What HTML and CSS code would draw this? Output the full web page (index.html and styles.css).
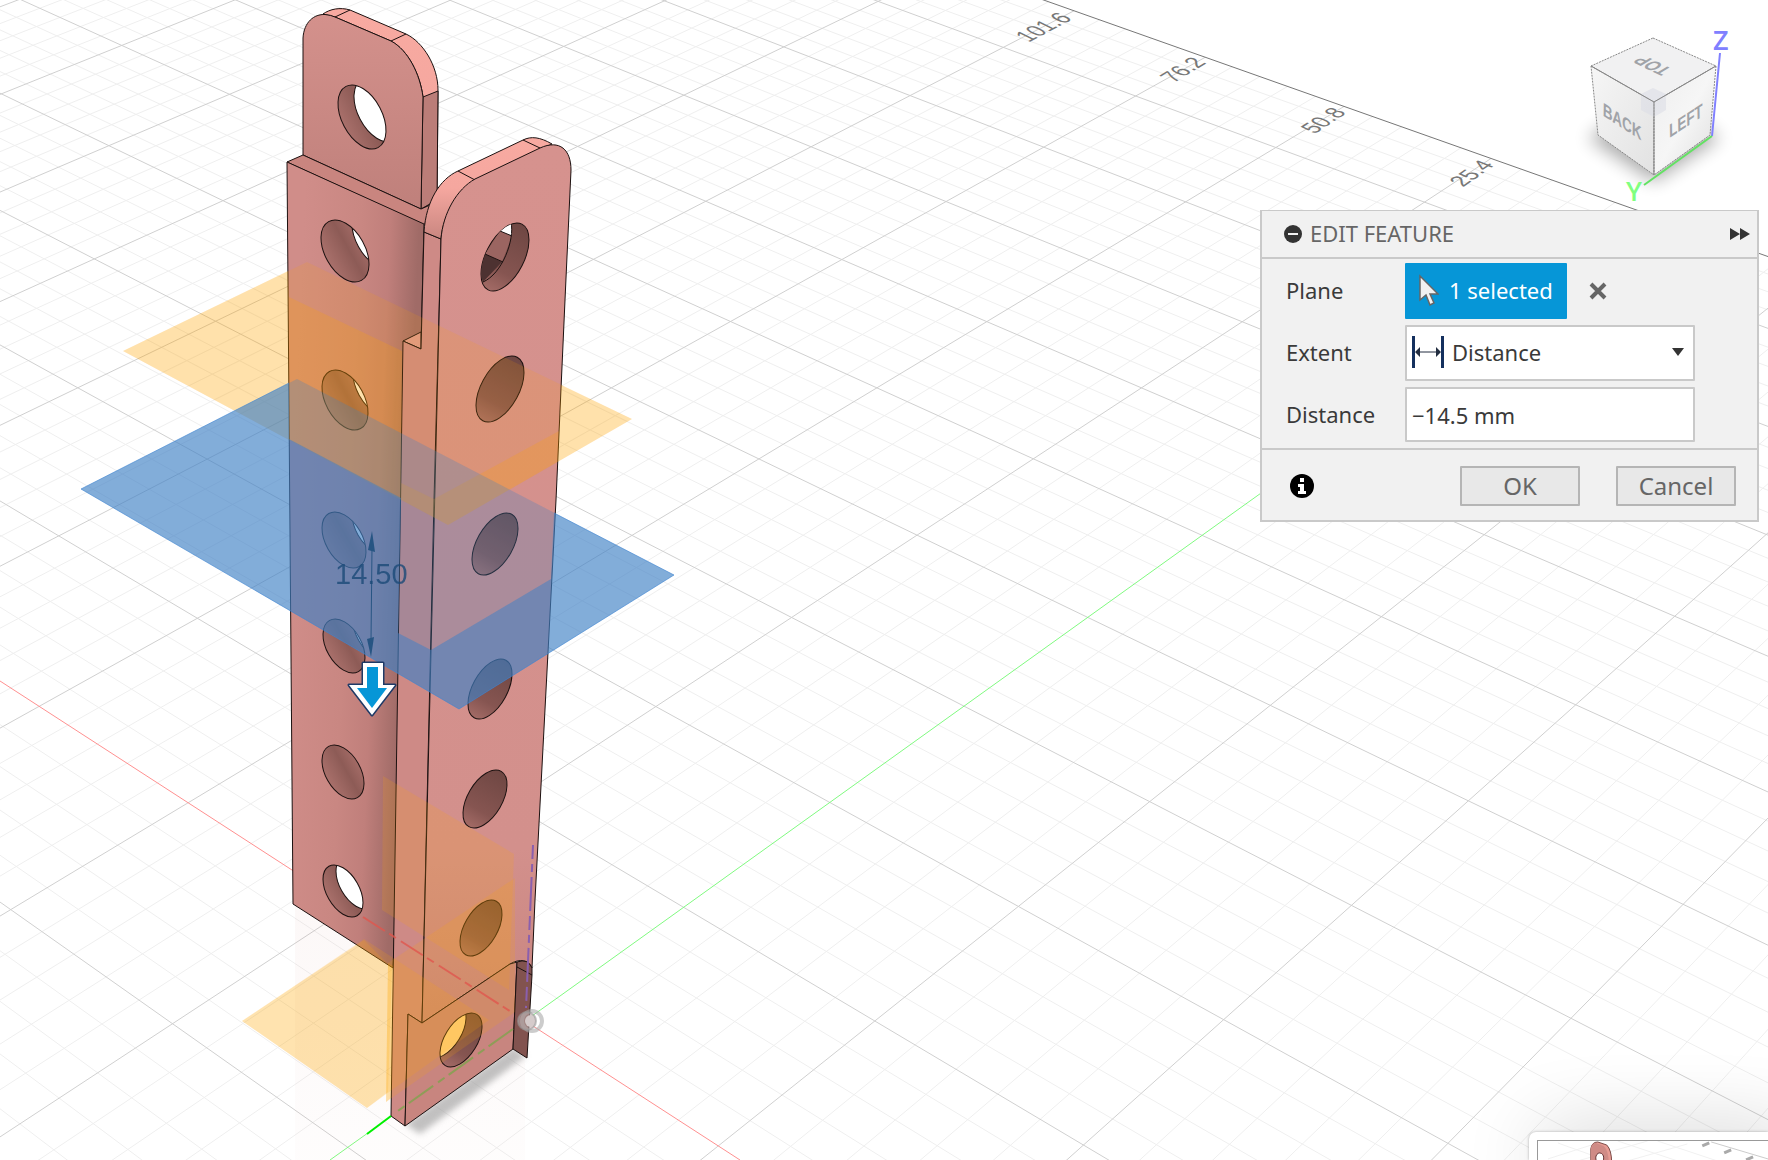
FILE: index.html
```html
<!DOCTYPE html>
<html lang="en">
<head>
<meta charset="utf-8">
<title>Edit Feature</title>
<link rel="stylesheet" href="styles.css">
</head>
<body>
<main class="workspace">
  <svg class="scene" viewBox="0 0 1768 1160" preserveAspectRatio="xMidYMid slice" role="img" aria-label="Bracket model with offset plane">
    <defs>
      <linearGradient id="flange" gradientUnits="userSpaceOnUse" x1="287" x2="403" y1="600" y2="605">
        <stop offset="0" stop-color="#d08d89"/><stop offset=".5" stop-color="#c98782"/><stop offset=".75" stop-color="#c07f7b"/><stop offset="1" stop-color="#a06b67"/>
      </linearGradient>
      <linearGradient id="tab" x1="0" x2="0" y1="0" y2="1">
        <stop offset="0" stop-color="#d4918c"/><stop offset="1" stop-color="#bf807b"/>
      </linearGradient>
      <linearGradient id="web" x1="0" x2="0" y1="0" y2="1">
        <stop offset="0" stop-color="#d6928e"/><stop offset=".8" stop-color="#d3908c"/><stop offset="1" stop-color="#c8857f"/>
      </linearGradient>
      <linearGradient id="rim" x1="0" x2="0" y1="0" y2="1">
        <stop offset="0" stop-color="#f8aaa1"/><stop offset=".5" stop-color="#f5a79f"/><stop offset="1" stop-color="#c98680"/>
      </linearGradient>
      <linearGradient id="boreLeft" x1="0" x2="1" y1="0" y2="0">
        <stop offset="0" stop-color="#a9706b"/><stop offset=".6" stop-color="#8d5b56"/><stop offset="1" stop-color="#a36b66"/>
      </linearGradient>
      <linearGradient id="boreRight" x1="0" x2="0" y1="0" y2="1">
        <stop offset="0" stop-color="#6f4743"/><stop offset=".7" stop-color="#865551"/><stop offset="1" stop-color="#a36b66"/>
      </linearGradient>
      <linearGradient id="mirror" x1="0" x2="0" y1="0" y2="1">
        <stop offset="0" stop-color="#d08880" stop-opacity=".06"/><stop offset="1" stop-color="#d08880" stop-opacity=".02"/>
      </linearGradient>
      <filter id="soft" x="-20%" y="-20%" width="140%" height="140%"><feGaussianBlur stdDeviation="3"/></filter>
    </defs>

    <g id="grid"></g>

    <g class="grid-label">
      <text text-anchor="end" transform="translate(1073 19) rotate(-28) skewX(36)">101.6</text>
      <text text-anchor="end" transform="translate(1207 63) rotate(-31) skewX(35)">76.2</text>
      <text text-anchor="end" transform="translate(1347 113) rotate(-33) skewX(34)">50.8</text>
      <text text-anchor="end" transform="translate(1495 165) rotate(-35) skewX(33)">25.4</text>
    </g>

    <path class="axis-x" d="M0 681L740 1160"/>
    <path class="axis-y" d="M330 1160L560 996L1650 214"/>

    <path fill="url(#mirror)" d="M295 900H525V1160H295Z"/>
    <path class="floor-shadow" filter="url(#soft)" d="M405 1124L513 1047L526 1056L420 1134Z"/>

    <g class="edge">
      <!-- rear tab -->
      <path fill="url(#rim)" d="M323 14C330 9 340 7 350 10L406 34C423 42 438 66 438 90L437 200L421 209L423 97C420 74 408 50 391 41L335 17Z"/>
      <path fill="#bb7d78" d="M423 97L438 91L437 200L421 209Z"/>
      <path fill="url(#tab)" d="M303 155L303 38C304 22 314 14 325 14.500Q331 15 335 17L391 41C408 50 420 74 423 97L421 209Z"/>
      <path d="M335 17L350 10M391 41L406 34"/>
      <!-- rear flange -->
      <path fill="#c9857f" d="M287 162L303 155L421 209L437 202L424 225Z"/>
      <path fill="url(#flange)" d="M287 162L424 224L421 345L393 968L293 904Z"/>
      <!-- web strip -->
      <path fill="#df9a8f" d="M403 341L421 332V349Z"/>
      <path fill="#ce8a86" d="M424 232L441 239L434 500L422 1023L408 1014L405 1126L391 1116L403 341L421 349Z"/>
      <!-- front flange -->
      <path fill="url(#rim)" d="M424 232C426 201 440 179 458 171L523 140C531 136 540 137 552 144L475 180C460 190 443 213 441 239Z"/>
      <path d="M458 171L475 180M523 140L540 148"/>
      <path fill="url(#web)" d="M441 239C443 213 457 189 475 179L540 148C560 139 571 150 571 170L565 300L556 500L535 900L532 968C529 960 520 958 510 964L422 1023Z"/>
      <path fill="#c8857f" d="M408 1014L422 1023L510 964L517 962L513 1049L405 1126Z"/>
      <path fill="#82534f" d="M517 962Q528 958 532 968L532 975L527 1058L513 1049Z"/>
      <path d="M517 967L532 975"/>
    </g>

    <g id="holes"></g>
    <g clip-path="url(#bore7)">
      <path fill="#9b6561" d="M500 231L512 236L502 262L485 254Z"/>
      <path fill="#4d3231" d="M485 254L502 262L483 282L478 268Z"/>
      <path fill="#fff" d="M500 231L511 222L512 236Z"/>
      <path class="line" d="M500 231L512 236M485 254L503 262M511 222C515 240 502 274 483 282"/>
    </g>

    <!-- origin planes -->
    <g fill="#ffa500">
      <path opacity=".16" d="M364 939L489 1020L367 1108L242 1021Z"/>
      <path opacity=".18" d="M364 940L392 968L388 1092L367 1108L242 1021Z"/>
      <path opacity=".16" d="M383 776L514 854L509 990L382 910Z"/>
      <path opacity=".16" d="M515 878L388 963L386 1102L515 1012Z"/>
      <path opacity=".2" d="M388 963L393 966L391 1098L386 1102Z"/>
    </g>

    <!-- base plane -->
    <path fill="#ffa500" opacity=".14" d="M307 262L632 419L448 525L123 351Z"/>
    <path fill="#ffa500" opacity=".22" d="M123 351L288 271L289 297L402 351L401 483L434 499L559 431L561 385L632 419L448 525Z"/>

    <!-- offset plane -->
    <path fill="#3f80c5" opacity=".27" d="M297 379L674 575L459 709L81 489Z"/>
    <path fill="#3f80c5" opacity=".52" d="M81 489L289 383L289 439L401 498L398 633L431 650L551 579L554 513L674 575L459 709Z"/>
    <path class="plane-edge" d="M289 383L81 489L459 709L674 575L554 513"/>

    <!-- axes inside the body -->
    <path class="hidden-x" d="M363 917L513 1013"/>
    <path class="hidden-y" d="M513 1029L395 1113"/>
    <path class="hidden-z" d="M533 845L526 1008"/>
    <path class="tip-y" d="M391 1116L367 1134"/>
    <g>
      <circle class="origin-shade" cx="532" cy="1021" r="10"/>
      <circle fill="#fff" cx="531" cy="1021" r="6"/>
      <circle class="origin-ring" cx="527" cy="1021" r="9"/>
    </g>

    <!-- dimension and drag handle -->
    <path class="dim-line" d="M372 548L371 640"/>
    <path class="dim-head" d="M372 531L375 552L368 550ZM371 657L374 637L367 639Z"/>
    <text class="dim-text" x="335" y="584">14.50</text>
    <path class="handle-outer" d="M363 663H383V685H395L372 715L349 685H363Z"/>
    <path class="handle-mid" d="M363 663H383V685H395L372 715L349 685H363Z"/>
    <path class="handle-core" d="M367 667H378V688H387L372 708L357 688H367Z"/>
  </svg>

  <svg class="view-cube" viewBox="0 0 190 210" role="img" aria-label="View cube">
    <defs>
      <linearGradient id="faceBack" x1="0" x2="1" y1="0" y2="1"><stop offset="0" stop-color="#f6f6f6"/><stop offset="1" stop-color="#e2e2e2"/></linearGradient>
      <linearGradient id="faceLeft" x1="0" x2="1" y1="0" y2="1"><stop offset="0" stop-color="#eee"/><stop offset=".5" stop-color="#f6f6f6"/><stop offset="1" stop-color="#ddd"/></linearGradient>
      <filter id="cubeBlur" x="-30%" y="-30%" width="160%" height="160%"><feGaussianBlur stdDeviation="9"/></filter>
    </defs>
    <path class="cube-shadow" filter="url(#cubeBlur)" d="M84 95L150 138L84 182L18 138Z"/>
    <g class="cube-face">
      <path fill="#f1f1f2" d="M83 38L146 66L84 102L21 66Z"/>
      <path fill="url(#faceBack)" d="M21 66L84 102V175L28 135Z"/>
      <path fill="url(#faceLeft)" d="M146 66L140 135L84 175V102Z"/>
    </g>
    <path fill="#dcdee6" opacity=".6" d="M71 94L83 88L96 94V110L84 117L71 110Z"/>
    <path class="cube-edge" d="M21 66L84 102L146 66M84 102V175"/>
    <g class="cube-text">
      <text text-anchor="middle" transform="translate(88 62) rotate(205) skewX(-34)">TOP</text>
      <text text-anchor="middle" transform="translate(52 128) rotate(33) skewX(32)">BACK</text>
      <text text-anchor="middle" transform="translate(116 127) rotate(-33) skewX(-32)">LEFT</text>
    </g>
    <path class="cube-z" d="M150 53L142 136"/>
    <path class="cube-y" d="M142 136L74 185"/>
    <text class="letter-z" x="143" y="50">Z</text>
    <text class="letter-y" x="56" y="201">Y</text>
  </svg>

  <form class="panel">
    <header class="panel-head">
      <button type="button" class="icon-button" aria-label="Collapse">
        <svg width="18" height="18" viewBox="0 0 18 18"><circle cx="9" cy="9" r="9" fill="#333"/><path d="M4 9H14" stroke="#f1f1f1" stroke-width="2"/></svg>
      </button>
      <h1 class="panel-title">EDIT FEATURE</h1>
      <button type="button" class="icon-button" aria-label="Expand">
        <svg width="20" height="12" viewBox="0 0 20 12"><path d="M0 0L10 6L0 12ZM10 0L20 6L10 12Z" fill="#333"/></svg>
      </button>
    </header>
    <div class="panel-body">
      <span class="label" id="planeLabel">Plane</span>
      <div class="plane-field">
        <button type="button" class="selection" aria-describedby="planeLabel">
          <svg width="20" height="32" viewBox="0 0 20 32"><path d="M1 2V26L7 21L11 31L15 29L11 20H19Z" fill="#f1f1f1" stroke="#666" stroke-width="1.500"/></svg>
          <span>1 selected</span>
        </button>
        <button type="button" class="icon-button" aria-label="Clear selection">
          <svg width="18" height="18" viewBox="0 0 18 18"><path d="M2 2L16 16M16 2L2 16" stroke="#666" stroke-width="4"/></svg>
        </button>
      </div>
      <label class="label" for="extent">Extent</label>
      <div class="select-wrap">
        <select id="extent" class="field"><option>Distance</option></select>
        <svg class="extent-icon" width="32" height="32" viewBox="0 0 32 32"><path d="M1.500 0V32M30.500 0V32" stroke="#14305e" stroke-width="3"/><path d="M5 16H27" stroke="#222d40" stroke-width="1"/><path d="M3 16L8 11V21ZM29 16L24 11V21Z" fill="#222d40"/></svg>
        <svg class="caret" width="12" height="8" viewBox="0 0 12 8"><path d="M0 0H12L6 8Z" fill="#333"/></svg>
      </div>
      <label class="label" for="distance">Distance</label>
      <input id="distance" class="field" type="text" value="−14.5 mm">
    </div>
    <footer class="panel-foot">
      <svg class="info" width="24" height="24" viewBox="0 0 24 24" role="img" aria-label="Information"><circle cx="12" cy="12" r="12"/><path d="M10 4H14V8H10ZM8 10H14V17H16V20H8V17H10V13H8Z" fill="#fff"/></svg>
      <button type="submit" class="action">OK</button>
      <button type="button" class="action">Cancel</button>
    </footer>
  </form>

  <aside class="preview" aria-label="Preview">
    <svg class="preview-image" viewBox="0 0 231 20" preserveAspectRatio="xMinYMin slice">
      <g stroke="#f1f1f1"><path d="M10 18L60 2M40 20L110 0M90 20L150 3M20 2L70 20M80 0L140 20M120 0L180 20"/></g>
      <path d="M174 1L231 18" stroke="#ccc" fill="none"/>
      <path d="M165 5L172 2M187 12L194 9M209 19L216 16" stroke="#aaa" stroke-width="3"/>
      <path d="M53 22V8Q54 1 60 1L69 4Q74 9 74 22Z" fill="#e79b93" stroke="#7c4c48"/>
      <path d="M53 22V8Q54 2 58 2L66 5Q71 10 71 22Z" fill="#cf8b86"/>
      <ellipse cx="62" cy="17" rx="4" ry="5" fill="#fff" stroke="#633"/>
    </svg>
  </aside>
</main>
<script src="scene.js"></script>
</body>
</html>
```
FILE: styles.css
```css
* { box-sizing: border-box; }

body {
  margin: 0;
  background: #fff;
  color: #3a3a3a;
  font-family: "Noto Sans", "Open Sans", sans-serif;
  font-size: 22px;
  line-height: 30px;
}

.workspace {
  position: relative;
  min-height: 100vh;
  overflow: hidden;
}

.scene {
  position: absolute;
  inset: 0;
  width: 100%;
  height: 100%;
}

/* Scene */
.minor { stroke: #efefef; stroke-width: 1; }
.major { stroke: #d0d0d0; stroke-width: 1; }
.border { stroke: #777; stroke-width: 1; }
.grid-label { fill: #777; font: 20px/1 "Liberation Sans Narrow", "Liberation Sans", sans-serif; }
.axis-x, .axis-y { fill: none; stroke-width: 1; }
.axis-x { stroke: #ff9090; }
.axis-y { stroke: #80fa80; }
.floor-shadow { fill: #999; opacity: .6; }
.edge { fill: none; stroke: #1c1110; stroke-width: 1; stroke-linejoin: round; }
.line { fill: none; stroke: #1c1110; stroke-width: 1; }
.plane-edge { fill: none; stroke: #3f86d2; opacity: .6; }
.hidden-x, .hidden-y, .hidden-z { fill: none; stroke-width: 2; }
.hidden-x { stroke: #e0564e; stroke-dasharray: 26 5 8 6; opacity: .8; }
.hidden-y { stroke: #7fa34e; stroke-dasharray: 30 5 8 6; opacity: .8; }
.hidden-z { stroke: #8a5fae; stroke-dasharray: 14 5 8 5 34 5; }
.tip-y { stroke: #00f000; stroke-width: 2; }
.origin-ring { fill: #b9a8a8; fill-opacity: .6; stroke: #999; stroke-opacity: .6; stroke-width: 2; }
.origin-shade { fill: none; stroke: #aaa; stroke-opacity: .6; stroke-width: 4; }
.dim-line { stroke: #275583; stroke-width: 1; }
.dim-head { fill: #275583; }
.dim-text { fill: #1b4a78; opacity: .8; font: 29px/1 "Liberation Sans", sans-serif; }
.handle-outer { fill: #1f3a66; stroke: #1f3a66; stroke-width: 3; stroke-linejoin: round; }
.handle-mid { fill: #fff; }
.handle-core { fill: #0696d7; }

/* View cube */
.view-cube {
  position: absolute;
  top: 0;
  right: 8px;
  width: 190px;
  height: 210px;
}
.cube-shadow { fill: #000; opacity: .32; }
.cube-face { stroke: #888; stroke-width: 1; stroke-dasharray: 2 1; }
.cube-edge { fill: none; stroke: #888; stroke-width: 1; }
.cube-text { fill: #a0a3a8; font: bold 16px/1 "Liberation Sans Narrow", "Liberation Sans", sans-serif; }
.cube-z { stroke: #8080ff; stroke-width: 2; }
.cube-y { stroke: #62e262; stroke-width: 2; }
.letter-z, .letter-y { font: 600 27px/1 "Open Sans", sans-serif; }
.letter-z { fill: #8080ff; }
.letter-y { fill: #80ff80; }

/* Dialog */
.panel {
  position: absolute;
  top: 210px;
  right: 9px;
  width: 499px;
  background: #f1f1f1;
  border: 2px solid #c9c9c9;
  border-top-width: 1px;
}

.panel-head {
  display: flex;
  align-items: center;
  gap: 8px;
  height: 48px;
  padding: 0 7px 0 22px;
  border-bottom: 2px solid #c9c9c9;
}

.panel-title {
  flex: 1;
  margin: 0;
  padding-bottom: 2px;
  color: #666;
  font-size: 22px;
  font-weight: 400;
}

.icon-button {
  display: flex;
  padding: 0;
  border: 0;
  background: none;
}

.panel-body {
  display: grid;
  grid-template-columns: 119px 290px;
  row-gap: 6px;
  align-items: center;
  padding: 4px 24px 6px;
}

.label { padding-bottom: 2px; }

.plane-field {
  display: flex;
  align-items: center;
  gap: 22px;
}

.selection {
  display: flex;
  align-items: center;
  gap: 10px;
  width: 162px;
  height: 56px;
  padding: 0 0 2px 14px;
  border: 0;
  border-radius: 1px;
  background: #0696d7;
  color: #fff;
  font: inherit;
  white-space: nowrap;
}

.select-wrap { position: relative; }

.field {
  display: block;
  width: 100%;
  height: 56px;
  padding: 0 5px 2px;
  border: 2px solid #c9c9c9;
  border-radius: 1px;
  background: #fff;
  color: #3a3a3a;
  font: inherit;
}

select.field {
  appearance: none;
  padding-left: 45px;
}

input.field {
  height: 55px;
  padding-bottom: 0;
}

.extent-icon {
  position: absolute;
  top: 11px;
  left: 7px;
}

.caret {
  position: absolute;
  top: 23px;
  right: 11px;
}

.panel-foot {
  display: flex;
  align-items: center;
  gap: 36px;
  height: 72px;
  padding: 2px 21px 0 28px;
  border-top: 2px solid #c9c9c9;
}

.info { margin-right: auto; }

.action {
  width: 120px;
  height: 40px;
  padding: 0;
  border: 2px solid #b5b5b5;
  border-radius: 1px;
  background: #e8e8e8;
  color: #666;
  font: inherit;
  font-size: 24px;
  line-height: 32px;
}

/* Preview window peeking in from the corner */
.preview {
  position: absolute;
  right: 0;
  bottom: 0;
  width: 239px;
  height: 28px;
  padding: 8px 0 0 8px;
  border-radius: 7px 0 0 0;
  background: #fff;
  box-shadow: 0 0 3px rgba(0, 0, 0, .3), 20px 10px 80px 10px rgba(0, 0, 0, .2);
}

.preview-image {
  display: block;
  width: 100%;
  height: 20px;
  border: 1px solid #999;
  border-width: 1px 0 0 1px;
}
```
FILE: scene.js
```js
const NS = "http://www.w3.org/2000/svg";

function add(parent, tag, attrs) {
  const node = document.createElementNS(NS, tag);
  for (const key in attrs) node.setAttribute(key, attrs[key]);
  parent.appendChild(node);
  return node;
}

/* Ground plane: u counts 25.4 mm steps from the green axis, v from the far border. */
function project(u, v) {
  const w = 1 + 0.0305 * u - 0.032 * v;
  return [
    (1647 - 110.48 * u - 131.33 * v) / w,
    (213.7 - 50.4 * u + 49.8 * v) / w
  ];
}

const grid = document.getElementById("grid");
function gridLine(a, b, kind) {
  const [x1, y1] = project(...a);
  const [x2, y2] = project(...b);
  add(grid, "line", { x1, y1, x2, y2, class: kind });
}
/* The two coloured axes take the place of grid lines 0 and 49. */
for (const kind of ["minor", "major"]) {
  for (let i = -30; i <= 60; i++) {
    if (i !== 0 && (i % 5 === 0) === (kind === "major")) gridLine([i / 5, 0], [i / 5, 14], kind);
  }
  for (let j = 1; j <= 70; j++) {
    if (j !== 49 && (j % 5 === 4) === (kind === "major")) gridLine([-6, j / 5], [12, j / 5], kind);
  }
}
gridLine([-6, 0], [12, 0], "border");

/* Bores: centre, half extents, lean, then the offset and fill of the far opening. */
const bores = [
  [362, 117, 24, 32, 0.42, 16, -7, "#fff"],
  [345, 251, 24, 31, 0.42, 31, -14, "#fff"],
  [345, 400, 23, 30, 0.42, 31, -14, "#fff"],
  [344, 540, 22, 28, 0.42, 30, -14, "#fff"],
  [344, 646, 21, 27, 0.42, 30, -14, "#fff"],
  [343, 772, 21, 27, 0.42],
  [343, 891, 20, 26, 0.45, 13, -8, "#fff"],
  [505, 257, 24, 34, -0.5],
  [500, 389, 24, 33, -0.5],
  [495, 544, 23, 31, -0.5],
  [490, 689, 22, 30, -0.5],
  [485, 799, 22, 29, -0.5],
  [481, 928, 21, 28, -0.5],
  [461, 1040, 21, 27, -0.5, -16, -9, "#ffd48c"]
];

const holes = document.getElementById("holes");
bores.forEach(([cx, cy, a, b, lean, dx, dy, fill], i) => {
  const cov = lean * a * b;
  const mean = (a * a + b * b) / 2;
  const half = (b * b - a * a) / 2;
  const r = Math.hypot(half, cov);
  const angle = -Math.atan2(cov, half) * 90 / Math.PI;
  const shape = (x, y) => ({
    cx: x, cy: y,
    rx: Math.sqrt(mean - r), ry: Math.sqrt(mean + r),
    transform: `rotate(${angle} ${x} ${y})`
  });
  const clip = add(holes, "clipPath", { id: "bore" + i });
  add(clip, "ellipse", shape(cx, cy));
  add(holes, "ellipse", { ...shape(cx, cy), fill: i < 7 ? "url(#boreLeft)" : "url(#boreRight)" });
  if (fill) {
    const group = add(holes, "g", { "clip-path": `url(#bore${i})` });
    add(group, "ellipse", { ...shape(cx + dx, cy + dy), fill, stroke: "#1c1110" });
  }
  add(holes, "ellipse", { ...shape(cx, cy), class: "line" });
});
```
